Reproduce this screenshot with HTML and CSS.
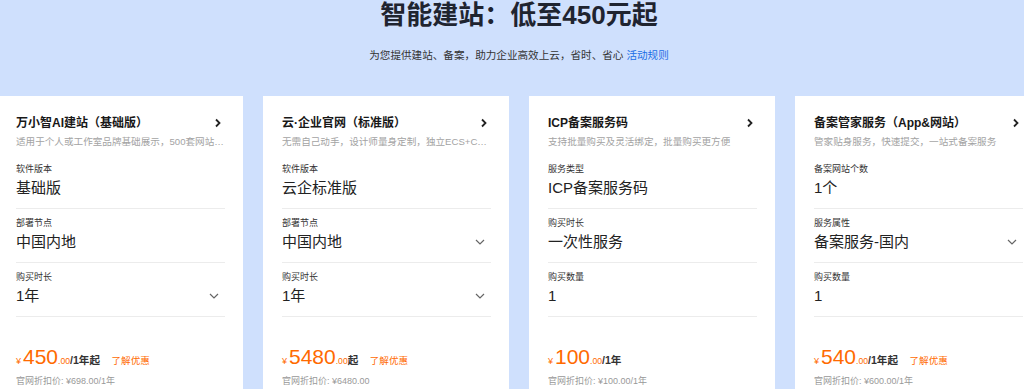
FILE: index.html
```html
<!DOCTYPE html>
<html lang="zh-CN">
<head>
    <meta charset="UTF-8">
    <meta name="viewport" content="width=device-width, initial-scale=1.0">
    <title>智能建站</title>
    <link rel="stylesheet" href="styles.css">
</head>
<body>
    <header class="hero">
        <h1 class="hero-title">智能建站：低至450元起</h1>
        <p class="hero-sub">为您提供建站、备案，助力企业高效上云，省时、省心 <a href="#" class="rule-link">活动规则</a></p>
    </header>

    <div class="card-track">
        <div class="card">
            <div class="card-title">
                <span>万小智AI建站（基础版）</span>
                <svg class="arrow" width="6" height="10" viewBox="0 0 6 10"><polyline points="1,1.5 4.5,5 1,8.5"/></svg>
            </div>
            <div class="card-desc">适用于个人或工作室品牌基础展示，500套网站风格模板任选</div>
            <div class="field">
                <div class="field-label">软件版本</div>
                <div class="field-value"><span>基础版</span></div>
            </div>
            <div class="field">
                <div class="field-label">部署节点</div>
                <div class="field-value"><span>中国内地</span></div>
            </div>
            <div class="field">
                <div class="field-label">购买时长</div>
                <div class="field-value">
                    <span>1年</span>
                    <svg class="drop" width="10" height="6" viewBox="0 0 10 6"><polyline points="1,1 5,5 9,1"/></svg>
                </div>
            </div>
            <div class="price">
                <div class="price-main">
                    <span class="yen">¥</span><span class="amount">450</span><span class="cents">.00</span><span class="unit">/1年起</span>
                    <a href="#" class="promo">了解优惠</a>
                </div>
                <div class="price-old">官网折扣价: ¥698.00/1年</div>
            </div>
        </div>

        <div class="card">
            <div class="card-title">
                <span>云·企业官网（标准版）</span>
                <svg class="arrow" width="6" height="10" viewBox="0 0 6 10"><polyline points="1,1.5 4.5,5 1,8.5"/></svg>
            </div>
            <div class="card-desc">无需自己动手，设计师量身定制，独立ECS+CDN加速，安全稳定</div>
            <div class="field">
                <div class="field-label">软件版本</div>
                <div class="field-value"><span>云企标准版</span></div>
            </div>
            <div class="field">
                <div class="field-label">部署节点</div>
                <div class="field-value">
                    <span>中国内地</span>
                    <svg class="drop" width="10" height="6" viewBox="0 0 10 6"><polyline points="1,1 5,5 9,1"/></svg>
                </div>
            </div>
            <div class="field">
                <div class="field-label">购买时长</div>
                <div class="field-value">
                    <span>1年</span>
                    <svg class="drop" width="10" height="6" viewBox="0 0 10 6"><polyline points="1,1 5,5 9,1"/></svg>
                </div>
            </div>
            <div class="price">
                <div class="price-main">
                    <span class="yen">¥</span><span class="amount">5480</span><span class="cents">.00</span><span class="unit">起</span>
                    <a href="#" class="promo">了解优惠</a>
                </div>
                <div class="price-old">官网折扣价: ¥6480.00</div>
            </div>
        </div>

        <div class="card">
            <div class="card-title">
                <span>ICP备案服务码</span>
                <svg class="arrow" width="6" height="10" viewBox="0 0 6 10"><polyline points="1,1.5 4.5,5 1,8.5"/></svg>
            </div>
            <div class="card-desc">支持批量购买及灵活绑定，批量购买更方便</div>
            <div class="field">
                <div class="field-label">服务类型</div>
                <div class="field-value"><span>ICP备案服务码</span></div>
            </div>
            <div class="field">
                <div class="field-label">购买时长</div>
                <div class="field-value"><span>一次性服务</span></div>
            </div>
            <div class="field">
                <div class="field-label">购买数量</div>
                <div class="field-value"><span>1</span></div>
            </div>
            <div class="price">
                <div class="price-main">
                    <span class="yen">¥</span><span class="amount">100</span><span class="cents">.00</span><span class="unit">/1年</span>
                </div>
                <div class="price-old">官网折扣价: ¥100.00/1年</div>
            </div>
        </div>

        <div class="card">
            <div class="card-title">
                <span>备案管家服务（App&amp;网站）</span>
                <svg class="arrow" width="6" height="10" viewBox="0 0 6 10"><polyline points="1,1.5 4.5,5 1,8.5"/></svg>
            </div>
            <div class="card-desc">管家贴身服务，快速提交，一站式备案服务</div>
            <div class="field">
                <div class="field-label">备案网站个数</div>
                <div class="field-value"><span>1个</span></div>
            </div>
            <div class="field">
                <div class="field-label">服务属性</div>
                <div class="field-value">
                    <span>备案服务-国内</span>
                    <svg class="drop" width="10" height="6" viewBox="0 0 10 6"><polyline points="1,1 5,5 9,1"/></svg>
                </div>
            </div>
            <div class="field">
                <div class="field-label">购买数量</div>
                <div class="field-value"><span>1</span></div>
            </div>
            <div class="price">
                <div class="price-main">
                    <span class="yen">¥</span><span class="amount">540</span><span class="cents">.00</span><span class="unit">/1年起</span>
                    <a href="#" class="promo">了解优惠</a>
                </div>
                <div class="price-old">官网折扣价: ¥600.00/1年</div>
            </div>
        </div>
    </div>
</body>
</html>
```

FILE: styles.css
```css
body, html {
    height: 100%;
    margin: 0;
    font-family: "Liberation Sans", "Noto Sans CJK SC", sans-serif;
    background-color: #cfe0fd;
    color: #333;
    overflow: hidden;
}
.hero {
    padding-left: 14px;
    text-align: center;
}
.hero-title {
    margin: 0;
    font-size: 26px;
    line-height: 30px;
    font-weight: bold;
    color: #1f2430;
}
.hero-sub {
    margin: 17px 0 0;
    font-size: 10.6px;
    line-height: 16px;
    color: #333;
}
.rule-link {
    color: #1a6ee6;
    text-decoration: none;
}
.card-track {
    display: flex;
    gap: 20px;
    margin-top: 33px;
    margin-left: -3px;
}
.card {
    flex: 0 0 246px;
    min-width: 0;
    box-sizing: border-box;
    height: 320px;
    padding: 18px 18px 0 19px;
    background-color: #fff;
}
.card-title {
    display: flex;
    justify-content: space-between;
    align-items: center;
    font-size: 12px;
    line-height: 18px;
    font-weight: bold;
    color: #181818;
}
.arrow {
    flex: none;
    margin-right: 4px;
    fill: none;
    stroke: #222;
    stroke-width: 1.8;
}
.card-desc {
    margin-top: 4px;
    font-size: 9.6px;
    line-height: 12px;
    color: #a3a3a3;
    white-space: nowrap;
    overflow: hidden;
    text-overflow: ellipsis;
}
.field {
    padding: 7px 0 8px;
    border-bottom: 1px solid #ececec;
}
.card-desc + .field {
    margin-top: 7px;
}
.field-label {
    font-size: 9px;
    line-height: 14px;
    color: #333;
}
.field-value {
    display: flex;
    justify-content: space-between;
    align-items: center;
    font-size: 15px;
    line-height: 24px;
    color: #222;
}
.drop {
    flex: none;
    margin-right: 6px;
    fill: none;
    stroke: #666;
    stroke-width: 1.2;
}
.price {
    margin-top: 27px;
}
.price-main {
    line-height: 26px;
    color: #ff6a00;
    white-space: nowrap;
}
.yen {
    font-size: 9px;
    margin-right: 2px;
}
.amount {
    font-size: 21px;
}
.cents {
    font-size: 8.6px;
}
.unit {
    font-size: 10.6px;
    color: #333;
    font-weight: bold;
}
.promo {
    margin-left: 7px;
    font-size: 9.6px;
    color: #ff6a00;
    text-decoration: none;
}
.price-old {
    font-size: 9px;
    line-height: 14px;
    color: #999;
}
```
